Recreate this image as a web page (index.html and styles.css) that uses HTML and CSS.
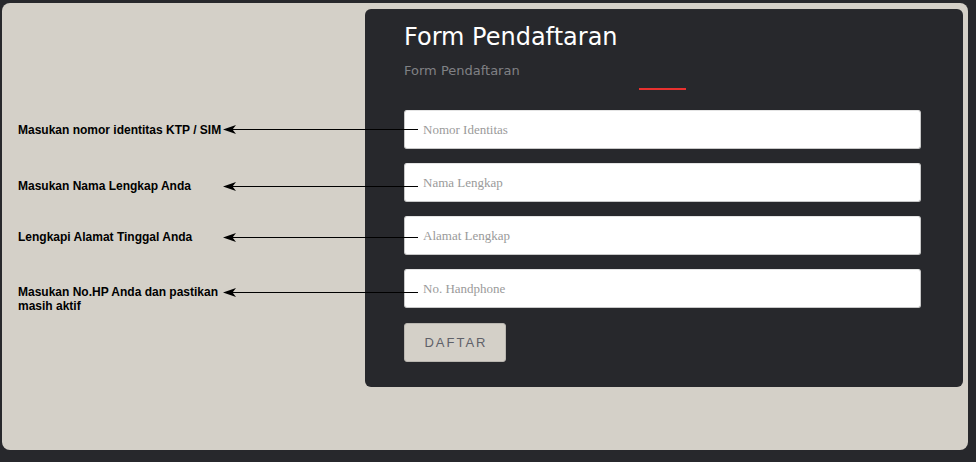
FILE: index.html
```html
<!DOCTYPE html>
<html lang="id">
<head>
<meta charset="utf-8">
<title>Form Pendaftaran</title>
<link rel="stylesheet" href="styles.css">
</head>
<body>
<div class="page">
  <div class="notes">
    <p class="note note-1">Masukan nomor identitas KTP / SIM</p>
    <p class="note note-2">Masukan Nama Lengkap Anda</p>
    <p class="note note-3">Lengkapi Alamat Tinggal Anda</p>
    <p class="note note-4">Masukan No.HP Anda dan pastikan masih aktif</p>
  </div>
  <form class="card">
    <h1 class="title">Form Pendaftaran</h1>
    <p class="subtitle">Form Pendaftaran</p>
    <div class="accent"></div>
    <div class="fields">
      <input class="field" type="text" placeholder="Nomor Identitas">
      <input class="field" type="text" placeholder="Nama Lengkap">
      <input class="field" type="text" placeholder="Alamat Lengkap">
      <input class="field" type="text" placeholder="No. Handphone">
    </div>
    <button class="submit" type="button">DAFTAR</button>
  </form>
</div>
<svg class="arrows" width="976" height="462" viewBox="0 0 976 462" aria-hidden="true">
  <g stroke="#000" stroke-width="1" fill="none">
    <line x1="232" y1="129.5" x2="418" y2="129.5"/>
    <line x1="232" y1="186.5" x2="418" y2="186.5"/>
    <line x1="232" y1="237.5" x2="418" y2="237.5"/>
    <line x1="232" y1="292.5" x2="418" y2="292.5"/>
  </g>
  <g fill="#000">
    <path d="M223 129.5 L236 125 L232.5 129.5 L236 134 Z"/>
    <path d="M223 186.5 L236 182 L232.5 186.5 L236 191 Z"/>
    <path d="M223 237.5 L236 233 L232.5 237.5 L236 242 Z"/>
    <path d="M223 292.5 L236 288 L232.5 292.5 L236 297 Z"/>
  </g>
</svg>
</body>
</html>
```

FILE: styles.css
```css
* {
  box-sizing: border-box;
}

html, body {
  margin: 0;
  padding: 0;
}

body {
  background: #27282c;
  width: 976px;
  height: 462px;
  overflow: hidden;
}

.page {
  margin: 3px 8px 0 2px;
  height: 447px;
  background: #d4d0c8;
  border-radius: 8px;
  display: flex;
  align-items: flex-start;
}

.notes {
  width: 363px;
  padding: 120px 0 0 16px;
  display: flex;
  flex-direction: column;
}

.note {
  margin: 0;
  width: 206px;
  font-family: "Liberation Sans", Arial, sans-serif;
  font-weight: bold;
  font-size: 12px;
  line-height: 14px;
  color: #000;
}

.note-2 {
  margin-top: 42px;
}

.note-3 {
  margin-top: 37px;
}

.note-4 {
  margin-top: 41px;
}

.card {
  margin: 6px 0 0 0;
  width: 598px;
  height: 378px;
  background: #27282c;
  border-radius: 6px;
  padding: 14px 42px 0 39px;
  display: flex;
  flex-direction: column;
  align-items: flex-start;
}

.title {
  margin: 0;
  font-family: "DejaVu Sans", Verdana, sans-serif;
  font-weight: normal;
  font-size: 24px;
  line-height: 28px;
  color: #ffffff;
}

.subtitle {
  margin: 12px 0 0 0;
  font-family: "DejaVu Sans", Verdana, sans-serif;
  font-size: 13px;
  line-height: 16px;
  color: #808185;
}

.accent {
  align-self: center;
  margin-top: 9px;
  width: 47px;
  height: 2px;
  background: #e8312f;
}

.fields {
  margin-top: 20px;
  width: 100%;
  display: flex;
  flex-direction: column;
  gap: 14px;
}

.field {
  display: block;
  width: 100%;
  height: 39px;
  margin: 0;
  padding: 0 0 0 18px;
  border: 1px solid #c8c8c8;
  border-top-color: #e4e4e4;
  border-radius: 3px;
  background: #ffffff;
  font-family: "Liberation Serif", "Times New Roman", serif;
  font-size: 13px;
  color: #333;
  outline: none;
}

.field::placeholder {
  color: #9a9a9a;
}

.submit {
  margin-top: 15px;
  width: 102px;
  height: 39px;
  padding: 0 0 0 2px;
  border: 1px solid #b9b6b0;
  border-radius: 3px;
  background: #d4d0c8;
  font-family: "Liberation Sans", Arial, sans-serif;
  font-size: 13px;
  letter-spacing: 2px;
  color: #5f6168;
}

.arrows {
  position: absolute;
  top: 0;
  left: 0;
  pointer-events: none;
}
```
